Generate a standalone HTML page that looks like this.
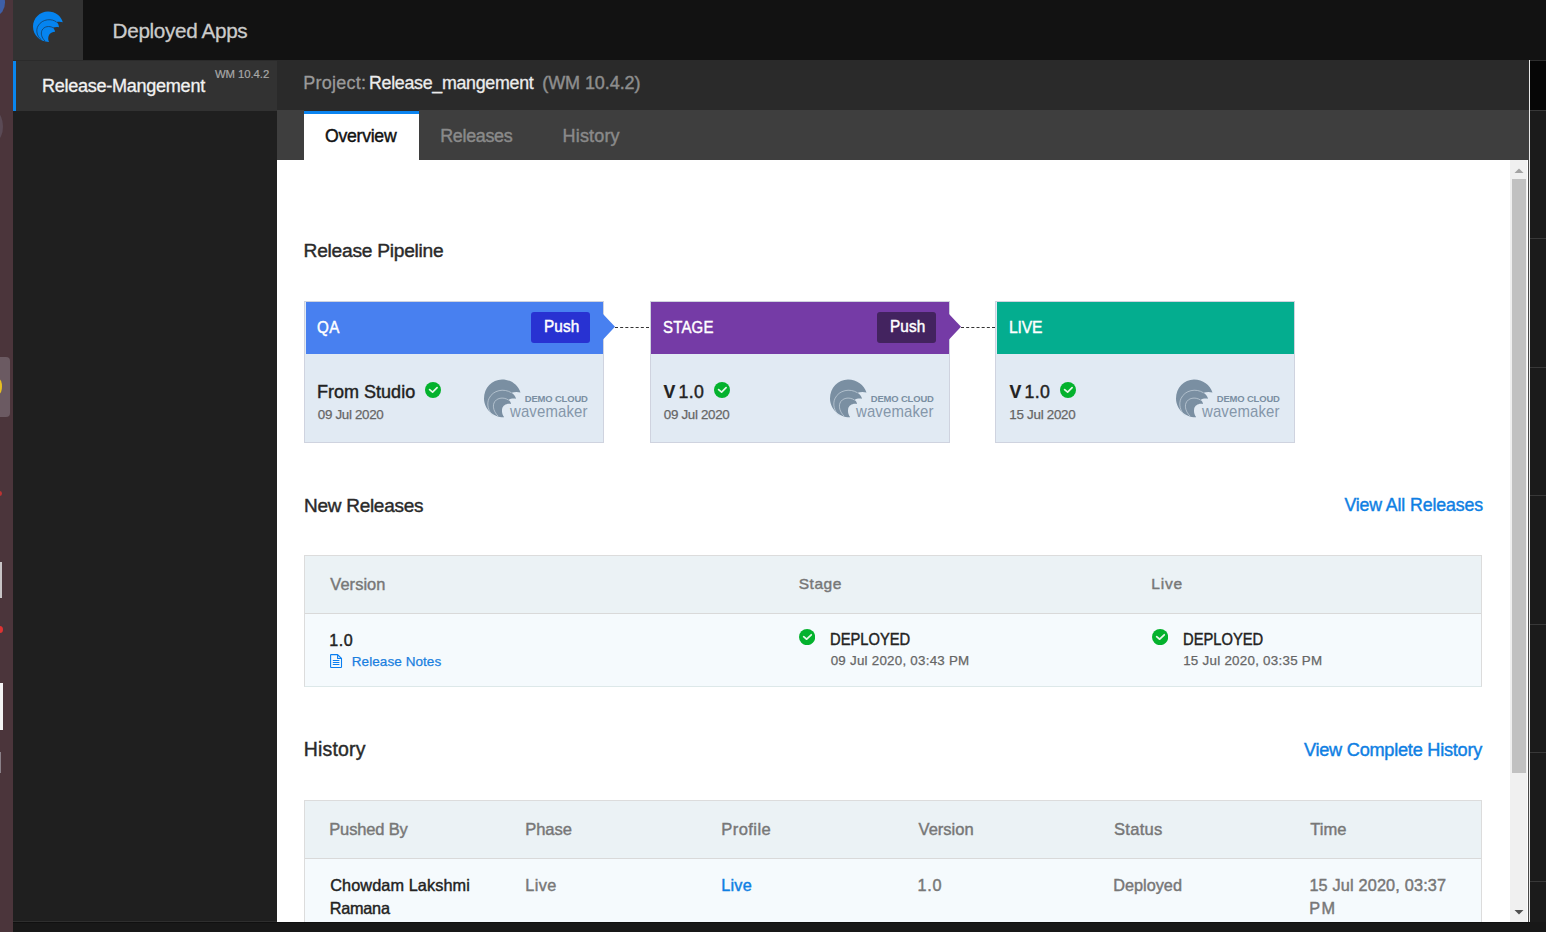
<!DOCTYPE html>
<html><head><meta charset="utf-8"><style>
html,body{margin:0;padding:0;}
body{width:1546px;height:932px;overflow:hidden;position:relative;background:#1b1b1b;font-family:"Liberation Sans",sans-serif;}
.a{position:absolute;}
.t{position:absolute;white-space:nowrap;}
</style></head><body>
<div class="a" style="left:0;top:0;width:13px;height:932px;background:#4b353b"></div>
<div class="a" style="left:-12px;top:-10px;width:17px;height:25px;border-radius:50%;background:#3e5fa8"></div>
<div class="a" style="left:-10px;top:113px;width:13px;height:27px;border-radius:50%;background:#5a4a55"></div>
<div class="a" style="left:-6px;top:357px;width:16px;height:60px;border-radius:4px;background:#6b5a62"></div>
<div class="a" style="left:-4px;top:379px;width:6px;height:15px;border-radius:50%;background:#e8c020"></div>
<div class="a" style="left:0;top:562px;width:2px;height:36px;background:#c8c4c6"></div>
<div class="a" style="left:-3px;top:626px;width:6px;height:7px;border-radius:50%;background:#d33"></div>
<div class="a" style="left:-3px;top:491px;width:5px;height:5px;border-radius:50%;background:#b33"></div>
<div class="a" style="left:0;top:683px;width:3px;height:47px;background:#f4f4f4"></div>
<div class="a" style="left:0;top:752px;width:1px;height:21px;background:#8a8088"></div>
<div class="a" style="left:13px;top:0;width:1533px;height:60px;background:#121212"></div>
<div class="a" style="left:13px;top:0;width:70px;height:60px;background:#323232"></div>
<svg class="a" style="left:32px;top:11px" width="32" height="32" viewBox="0 0 32 32">
<path d="M16 0.5 C23.2 0.5 29.2 5 30.8 11.3 C28.8 10.6 26.5 10.6 24.6 11.1 C26 12.5 26.9 14.3 27 16.2 C25 15.8 22.8 16 20.9 16.6 C22 17.7 22.8 19.2 23.1 20.7 C21 20.6 18.9 21.6 17.5 23.3 C16 25.3 15.8 28.5 17 30.9 C8.5 31 1 24.5 1 15.5 C1 7.2 7.8 0.5 16 0.5 Z" fill="#0584f0"/>
<path d="M24.6 11.1 C20.5 7.6 10.5 7.2 6 15 C3.8 19 4.5 25 9.5 29" fill="none" stroke="#17385a" stroke-width="0.75"/>
<path d="M20.9 16.6 C17.5 14.8 12 15 9.9 19.5 C8.6 22.5 9.5 26.5 13 30" fill="none" stroke="#17385a" stroke-width="0.75"/>
</svg>
<div class="t" style="left:112.61px;top:21.03px;font-size:20.69px;line-height:20.69px;color:#cbcbcb;font-weight:normal;letter-spacing:-0.339px;-webkit-text-stroke:0.3px #cbcbcb;">Deployed Apps</div>
<div class="a" style="left:13px;top:60px;width:264px;height:862px;background:#1f1f1f"></div>
<div class="a" style="left:13px;top:60px;width:264px;height:1px;background:#2b2b2b"></div>
<div class="a" style="left:13px;top:61px;width:264px;height:50px;background:#323232"></div>
<div class="a" style="left:13px;top:61px;width:3px;height:50px;background:#0a86ee"></div>
<div class="t" style="left:41.96px;top:76.52px;font-size:18.08px;line-height:18.08px;color:#f2f2f2;font-weight:normal;letter-spacing:-0.287px;-webkit-text-stroke:0.3px #f2f2f2;">Release-Mangement</div>
<div class="t" style="left:215.00px;top:69.38px;font-size:11.34px;line-height:11.34px;color:#a8a8a8;font-weight:normal;letter-spacing:-0.072px;-webkit-text-stroke:0.2px #a8a8a8;">WM 10.4.2</div>
<div class="a" style="left:1529px;top:60px;width:1px;height:862px;background:#e8e8e8"></div>
<div class="a" style="left:1530px;top:60px;width:16px;height:50px;background:#060606"></div>
<div class="a" style="left:1530px;top:60px;width:16px;height:1px;background:#2e2e2e"></div>
<div class="a" style="left:1530px;top:110px;width:16px;height:812px;background:#1b1b1b"></div>
<div class="a" style="left:1530px;top:110px;width:16px;height:1px;background:#383838"></div>
<div class="a" style="left:1530px;top:238px;width:16px;height:1px;background:#383838"></div>
<div class="a" style="left:1530px;top:367px;width:16px;height:1px;background:#383838"></div>
<div class="a" style="left:1530px;top:495px;width:16px;height:1px;background:#383838"></div>
<div class="a" style="left:1530px;top:624px;width:16px;height:1px;background:#383838"></div>
<div class="a" style="left:1530px;top:752px;width:16px;height:1px;background:#383838"></div>
<div class="a" style="left:1530px;top:881px;width:16px;height:1px;background:#383838"></div>
<div class="a" style="left:277px;top:60px;width:1252px;height:50px;background:#2a2a2a"></div>
<div class="t" style="left:303.14px;top:73.57px;font-size:18.02px;line-height:18.02px;color:#9a9a9a;font-weight:normal;letter-spacing:0.272px;-webkit-text-stroke:0.3px #9a9a9a;">Project:</div>
<div class="t" style="left:368.96px;top:74.54px;font-size:17.81px;line-height:17.81px;color:#ececec;font-weight:normal;letter-spacing:-0.277px;-webkit-text-stroke:0.3px #ececec;">Release_mangement</div>
<div class="t" style="left:542.24px;top:73.57px;font-size:18.02px;line-height:18.02px;color:#8e8e8e;font-weight:normal;letter-spacing:-0.081px;-webkit-text-stroke:0.42px #8e8e8e;">(WM 10.4.2)</div>
<div class="a" style="left:277px;top:110px;width:1252px;height:50px;background:#3e3e3e"></div>
<div class="a" style="left:304px;top:110px;width:115px;height:50px;background:#fff"></div>
<div class="a" style="left:304px;top:110px;width:115px;height:1px;background:#2a2a2a"></div>
<div class="a" style="left:304px;top:111px;width:115px;height:3px;background:#0a84f0"></div>
<div class="t" style="left:325.12px;top:127.84px;font-size:17.67px;line-height:17.67px;color:#111;font-weight:normal;letter-spacing:-0.292px;-webkit-text-stroke:0.42px #111;">Overview</div>
<div class="t" style="left:440.22px;top:127.63px;font-size:17.92px;line-height:17.92px;color:#8a8a8a;font-weight:normal;letter-spacing:-0.308px;-webkit-text-stroke:0.42px #8a8a8a;">Releases</div>
<div class="t" style="left:562.58px;top:126.75px;font-size:18.02px;line-height:18.02px;color:#8a8a8a;font-weight:normal;letter-spacing:0.167px;-webkit-text-stroke:0.42px #8a8a8a;">History</div>
<div class="a" style="left:277px;top:160px;width:1252px;height:762px;background:#fff"></div>
<div class="a" style="left:1510px;top:160px;width:17px;height:762px;background:#f0f0f0"></div>
<div class="a" style="left:1528px;top:160px;width:1px;height:762px;background:#474747"></div>
<div class="a" style="left:1512px;top:179px;width:14px;height:594px;background:#c1c1c1"></div>
<svg class="a" style="left:1513px;top:167px" width="12" height="7" viewBox="0 0 12 7"><path d="M1.5 6 L6 1.5 L10.5 6 Z" fill="#a3a3a3"/></svg>
<div class="t" style="left:303.56px;top:240.58px;font-size:19.19px;line-height:19.19px;color:#2a2a2a;font-weight:normal;letter-spacing:-0.259px;-webkit-text-stroke:0.42px #2a2a2a;">Release Pipeline</div>
<div class="a" style="left:304px;top:301px;width:298px;height:140px;border:1px solid #cfd3df;background:#e1eaf3"></div>
<div class="a" style="left:306px;top:302px;width:297px;height:52px;background:#4880f0"></div>
<svg class="a" style="left:603px;top:314px" width="13" height="26" viewBox="0 0 13 26"><path d="M0 0 L12 12.7 L0 25.4 Z" fill="#4880f0"/></svg>
<div class="a" style="left:615px;top:327px;width:34px;height:0;border-top:1px dashed #333"></div>
<div class="t" style="left:316.88px;top:319.65px;font-size:16.72px;line-height:16.72px;color:#fff;font-weight:normal;letter-spacing:0.605px;-webkit-text-stroke:0.45px #fff;transform:scaleX(0.9090909090909086);transform-origin:0 0;">QA</div>
<div class="a" style="left:531px;top:312px;width:59px;height:31px;border-radius:3px;background:#2832d2"></div>
<div class="t" style="left:543.51px;top:318.59px;font-size:15.84px;line-height:15.84px;color:#fff;font-weight:normal;letter-spacing:0.085px;-webkit-text-stroke:0.45px #fff;transform:scaleX(0.9697416974169761);transform-origin:0 0;">Push</div>
<div class="t" style="left:316.96px;top:382.57px;font-size:18.02px;line-height:18.02px;color:#222;font-weight:normal;letter-spacing:0.009px;-webkit-text-stroke:0.42px #222;">From Studio</div>
<svg class="a" style="left:425.20px;top:382.00px" width="16" height="16" viewBox="0 0 16 16"><circle cx="8" cy="8" r="8" fill="#04b22d"/><path d="M4.6 7.6 L7.6 10.1 L12.1 5.7" fill="none" stroke="#e6f7e8" stroke-width="1.7" stroke-linecap="round" stroke-linejoin="round"/></svg>
<div class="t" style="left:317.86px;top:407.68px;font-size:13.37px;line-height:13.37px;color:#666;font-weight:normal;letter-spacing:-0.328px;-webkit-text-stroke:0.25px #666;">09 Jul 2020</div>
<svg class="a" style="left:484px;top:379px" width="38" height="39" viewBox="0 0 38 39"><path d="M18 0.5 C27 0.5 34 6 36.5 13.5 C33 12.5 30 13 27.5 13.8 C30 15.5 31.5 17.5 32 19.8 C29 19.3 26.5 19.8 24.5 21 C26 22 27 23.5 27 25 C22.5 24 19 26.5 18.2 29.5 C17.6 32.5 18.2 35.8 20.2 38.3 C9 38.5 0 30 0 19.5 C0 9 8 0.5 18 0.5 Z" fill="#7a8fa2"/><path d="M27.5 13.8 C20 9 9 11 5 19.5 C2.5 25 4 32 9 36.5" fill="none" stroke="#c9d4de" stroke-width="0.7"/><path d="M24.5 21 C19 17.5 12 19 10 24 C8.5 28 10 33 14 37" fill="none" stroke="#c9d4de" stroke-width="0.7"/></svg>
<div class="t" style="left:524.84px;top:393.82px;font-size:9.45px;line-height:9.45px;color:#7a8fa2;font-weight:bold;letter-spacing:-0.159px;">DEMO CLOUD</div>
<div class="t" style="left:510.36px;top:403.57px;font-size:16.6px;line-height:16.6px;color:#8597aa;font-weight:normal;letter-spacing:0.144px;transform:scaleX(0.9);transform-origin:0 0;">wavemaker</div>
<div class="a" style="left:650px;top:301px;width:298px;height:140px;border:1px solid #cfd3df;background:#e1eaf3"></div>
<div class="a" style="left:651px;top:302px;width:298px;height:52px;background:#753ba6"></div>
<svg class="a" style="left:949px;top:314px" width="13" height="26" viewBox="0 0 13 26"><path d="M0 0 L12 12.7 L0 25.4 Z" fill="#753ba6"/></svg>
<div class="a" style="left:961px;top:327px;width:34px;height:0;border-top:1px dashed #333"></div>
<div class="t" style="left:662.89px;top:319.65px;font-size:16.72px;line-height:16.72px;color:#fff;font-weight:normal;letter-spacing:0.213px;-webkit-text-stroke:0.45px #fff;transform:scaleX(0.8969976905311777);transform-origin:0 0;">STAGE</div>
<div class="a" style="left:877px;top:312px;width:59px;height:31px;border-radius:3px;background:#43235f"></div>
<div class="t" style="left:889.51px;top:318.59px;font-size:15.84px;line-height:15.84px;color:#fff;font-weight:normal;letter-spacing:0.085px;-webkit-text-stroke:0.45px #fff;transform:scaleX(0.9697416974169761);transform-origin:0 0;">Push</div>
<div class="t" style="left:663.59px;top:383.79px;font-size:17.73px;line-height:17.73px;color:#222;font-weight:bold;letter-spacing:0.000px;-webkit-text-stroke:0.2px #222;">V</div>
<div class="t" style="left:678.62px;top:383.79px;font-size:17.73px;line-height:17.73px;color:#222;font-weight:normal;letter-spacing:0.247px;-webkit-text-stroke:0.42px #222;">1.0</div>
<svg class="a" style="left:714.10px;top:382.00px" width="16" height="16" viewBox="0 0 16 16"><circle cx="8" cy="8" r="8" fill="#04b22d"/><path d="M4.6 7.6 L7.6 10.1 L12.1 5.7" fill="none" stroke="#e6f7e8" stroke-width="1.7" stroke-linecap="round" stroke-linejoin="round"/></svg>
<div class="t" style="left:663.86px;top:407.68px;font-size:13.37px;line-height:13.37px;color:#666;font-weight:normal;letter-spacing:-0.328px;-webkit-text-stroke:0.25px #666;">09 Jul 2020</div>
<svg class="a" style="left:830px;top:379px" width="38" height="39" viewBox="0 0 38 39"><path d="M18 0.5 C27 0.5 34 6 36.5 13.5 C33 12.5 30 13 27.5 13.8 C30 15.5 31.5 17.5 32 19.8 C29 19.3 26.5 19.8 24.5 21 C26 22 27 23.5 27 25 C22.5 24 19 26.5 18.2 29.5 C17.6 32.5 18.2 35.8 20.2 38.3 C9 38.5 0 30 0 19.5 C0 9 8 0.5 18 0.5 Z" fill="#7a8fa2"/><path d="M27.5 13.8 C20 9 9 11 5 19.5 C2.5 25 4 32 9 36.5" fill="none" stroke="#c9d4de" stroke-width="0.7"/><path d="M24.5 21 C19 17.5 12 19 10 24 C8.5 28 10 33 14 37" fill="none" stroke="#c9d4de" stroke-width="0.7"/></svg>
<div class="t" style="left:870.84px;top:393.82px;font-size:9.45px;line-height:9.45px;color:#7a8fa2;font-weight:bold;letter-spacing:-0.159px;">DEMO CLOUD</div>
<div class="t" style="left:856.36px;top:403.57px;font-size:16.6px;line-height:16.6px;color:#8597aa;font-weight:normal;letter-spacing:0.144px;transform:scaleX(0.9);transform-origin:0 0;">wavemaker</div>
<div class="a" style="left:995px;top:301px;width:298px;height:140px;border:1px solid #cfd3df;background:#e1eaf3"></div>
<div class="a" style="left:997px;top:302px;width:297px;height:52px;background:#04ad8f"></div>
<div class="t" style="left:1009.07px;top:319.65px;font-size:16.72px;line-height:16.72px;color:#fff;font-weight:normal;letter-spacing:-0.123px;-webkit-text-stroke:0.45px #fff;transform:scaleX(0.9357664233576641);transform-origin:0 0;">LIVE</div>
<div class="t" style="left:1009.59px;top:383.79px;font-size:17.73px;line-height:17.73px;color:#222;font-weight:bold;letter-spacing:0.000px;-webkit-text-stroke:0.2px #222;">V</div>
<div class="t" style="left:1024.62px;top:383.79px;font-size:17.73px;line-height:17.73px;color:#222;font-weight:normal;letter-spacing:0.247px;-webkit-text-stroke:0.42px #222;">1.0</div>
<svg class="a" style="left:1059.60px;top:382.00px" width="16" height="16" viewBox="0 0 16 16"><circle cx="8" cy="8" r="8" fill="#04b22d"/><path d="M4.6 7.6 L7.6 10.1 L12.1 5.7" fill="none" stroke="#e6f7e8" stroke-width="1.7" stroke-linecap="round" stroke-linejoin="round"/></svg>
<div class="t" style="left:1009.36px;top:407.68px;font-size:13.37px;line-height:13.37px;color:#666;font-weight:normal;letter-spacing:-0.278px;-webkit-text-stroke:0.25px #666;">15 Jul 2020</div>
<svg class="a" style="left:1176px;top:379px" width="38" height="39" viewBox="0 0 38 39"><path d="M18 0.5 C27 0.5 34 6 36.5 13.5 C33 12.5 30 13 27.5 13.8 C30 15.5 31.5 17.5 32 19.8 C29 19.3 26.5 19.8 24.5 21 C26 22 27 23.5 27 25 C22.5 24 19 26.5 18.2 29.5 C17.6 32.5 18.2 35.8 20.2 38.3 C9 38.5 0 30 0 19.5 C0 9 8 0.5 18 0.5 Z" fill="#7a8fa2"/><path d="M27.5 13.8 C20 9 9 11 5 19.5 C2.5 25 4 32 9 36.5" fill="none" stroke="#c9d4de" stroke-width="0.7"/><path d="M24.5 21 C19 17.5 12 19 10 24 C8.5 28 10 33 14 37" fill="none" stroke="#c9d4de" stroke-width="0.7"/></svg>
<div class="t" style="left:1216.84px;top:393.82px;font-size:9.45px;line-height:9.45px;color:#7a8fa2;font-weight:bold;letter-spacing:-0.159px;">DEMO CLOUD</div>
<div class="t" style="left:1202.36px;top:403.57px;font-size:16.6px;line-height:16.6px;color:#8597aa;font-weight:normal;letter-spacing:0.144px;transform:scaleX(0.9);transform-origin:0 0;">wavemaker</div>
<div class="t" style="left:304.04px;top:496.11px;font-size:18.98px;line-height:18.98px;color:#2a2a2a;font-weight:normal;letter-spacing:-0.263px;-webkit-text-stroke:0.42px #2a2a2a;">New Releases</div>
<div class="t" style="left:1344.41px;top:497.43px;font-size:17.73px;line-height:17.73px;color:#0f7fe3;font-weight:normal;letter-spacing:-0.118px;-webkit-text-stroke:0.42px #0f7fe3;">View All Releases</div>
<div class="a" style="left:304px;top:555px;width:1176px;height:130px;border:1px solid #dcdcdc;border-bottom-color:#dde8e9;background:#f5fafd"></div>
<div class="a" style="left:305px;top:556px;width:1176px;height:57px;background:#ebf2f5;border-bottom:1px solid #d9d9d9"></div>
<div class="t" style="left:330.33px;top:576.28px;font-size:16.42px;line-height:16.42px;color:#777;font-weight:normal;letter-spacing:0.064px;-webkit-text-stroke:0.42px #777;">Version</div>
<div class="t" style="left:798.71px;top:576.48px;font-size:15.55px;line-height:15.55px;color:#777;font-weight:normal;letter-spacing:0.524px;-webkit-text-stroke:0.42px #777;">Stage</div>
<div class="t" style="left:1151.21px;top:576.48px;font-size:15.55px;line-height:15.55px;color:#777;font-weight:normal;letter-spacing:0.798px;-webkit-text-stroke:0.42px #777;">Live</div>
<div class="t" style="left:329.21px;top:631.81px;font-size:16.13px;line-height:16.13px;color:#222;font-weight:normal;letter-spacing:0.618px;-webkit-text-stroke:0.42px #222;">1.0</div>
<svg class="a" style="left:330px;top:654px" width="13" height="15" viewBox="0 0 13 15"><path d="M1.5 0.6 H7.6 L11.5 4.5 V12.9 Q11.5 13.5 10.9 13.5 H1.1 Q0.6 13.5 0.6 12.9 V1.1 Q0.6 0.6 1.1 0.6 Z M7.6 0.6 V4.5 H11.5" fill="none" stroke="#0a7ef0" stroke-width="1.1" stroke-linejoin="round"/><path d="M3.2 6.5 H9 M3.2 8.5 H9 M3.2 10.5 H9" stroke="#0a7ef0" stroke-width="1" stroke-linecap="round"/></svg>
<div class="t" style="left:351.77px;top:655.18px;font-size:13.52px;line-height:13.52px;color:#1a7fdf;font-weight:normal;letter-spacing:0.066px;-webkit-text-stroke:0.25px #1a7fdf;">Release Notes</div>
<svg class="a" style="left:799.30px;top:628.80px" width="16.2" height="16.2" viewBox="0 0 16 16"><circle cx="8" cy="8" r="8" fill="#04b22d"/><path d="M4.6 7.6 L7.6 10.1 L12.1 5.7" fill="none" stroke="#e6f7e8" stroke-width="1.7" stroke-linecap="round" stroke-linejoin="round"/></svg>
<svg class="a" style="left:1152.30px;top:628.80px" width="16.2" height="16.2" viewBox="0 0 16 16"><circle cx="8" cy="8" r="8" fill="#04b22d"/><path d="M4.6 7.6 L7.6 10.1 L12.1 5.7" fill="none" stroke="#e6f7e8" stroke-width="1.7" stroke-linecap="round" stroke-linejoin="round"/></svg>
<div class="t" style="left:830.03px;top:632.26px;font-size:15.99px;line-height:15.99px;color:#222;font-weight:normal;letter-spacing:-0.006px;-webkit-text-stroke:0.42px #222;transform:scaleX(0.9219383259911892);transform-origin:0 0;">DEPLOYED</div>
<div class="t" style="left:830.68px;top:654.12px;font-size:13.37px;line-height:13.37px;color:#666;font-weight:normal;letter-spacing:0.243px;-webkit-text-stroke:0.25px #666;">09 Jul 2020, 03:43 PM</div>
<div class="t" style="left:1183.03px;top:632.26px;font-size:15.99px;line-height:15.99px;color:#222;font-weight:normal;letter-spacing:-0.006px;-webkit-text-stroke:0.42px #222;transform:scaleX(0.9219383259911905);transform-origin:0 0;">DEPLOYED</div>
<div class="t" style="left:1183.18px;top:654.12px;font-size:13.37px;line-height:13.37px;color:#666;font-weight:normal;letter-spacing:0.264px;-webkit-text-stroke:0.25px #666;">15 Jul 2020, 03:35 PM</div>
<div class="t" style="left:303.73px;top:739.51px;font-size:19.48px;line-height:19.48px;color:#2a2a2a;font-weight:normal;letter-spacing:0.187px;-webkit-text-stroke:0.42px #2a2a2a;">History</div>
<div class="t" style="left:1303.96px;top:740.56px;font-size:18.15px;line-height:18.15px;color:#0f7fe3;font-weight:normal;letter-spacing:-0.240px;-webkit-text-stroke:0.42px #0f7fe3;">View Complete History</div>
<div class="a" style="left:304px;top:800px;width:1176px;height:200px;border:1px solid #dcdcdc;border-bottom-color:#dde8e9;background:#f5fafd"></div>
<div class="a" style="left:305px;top:801px;width:1176px;height:57px;background:#ebf2f5;border-bottom:1px solid #d9d9d9"></div>
<div class="t" style="left:329.27px;top:821.82px;font-size:16.52px;line-height:16.52px;color:#777;font-weight:normal;letter-spacing:-0.169px;-webkit-text-stroke:0.42px #777;">Pushed By</div>
<div class="t" style="left:525.27px;top:821.77px;font-size:16.57px;line-height:16.57px;color:#777;font-weight:normal;letter-spacing:-0.085px;-webkit-text-stroke:0.42px #777;">Phase</div>
<div class="t" style="left:721.27px;top:821.77px;font-size:16.57px;line-height:16.57px;color:#777;font-weight:normal;letter-spacing:0.413px;-webkit-text-stroke:0.42px #777;">Profile</div>
<div class="t" style="left:918.52px;top:821.77px;font-size:16.57px;line-height:16.57px;color:#777;font-weight:normal;letter-spacing:-0.022px;-webkit-text-stroke:0.42px #777;">Version</div>
<div class="t" style="left:1113.89px;top:821.77px;font-size:16.57px;line-height:16.57px;color:#777;font-weight:normal;letter-spacing:0.301px;-webkit-text-stroke:0.42px #777;">Status</div>
<div class="t" style="left:1310.26px;top:821.77px;font-size:16.57px;line-height:16.57px;color:#777;font-weight:normal;letter-spacing:0.017px;-webkit-text-stroke:0.42px #777;">Time</div>
<div class="t" style="left:330.21px;top:876.68px;font-size:16.28px;line-height:16.28px;color:#222;font-weight:normal;letter-spacing:0.089px;-webkit-text-stroke:0.42px #222;">Chowdam Lakshmi</div>
<div class="t" style="left:329.71px;top:900.22px;font-size:16.28px;line-height:16.28px;color:#222;font-weight:normal;letter-spacing:-0.244px;-webkit-text-stroke:0.42px #222;">Ramana</div>
<div class="t" style="left:525.27px;top:876.68px;font-size:16.28px;line-height:16.28px;color:#777;font-weight:normal;letter-spacing:0.423px;-webkit-text-stroke:0.42px #777;">Live</div>
<div class="t" style="left:721.27px;top:876.68px;font-size:16.28px;line-height:16.28px;color:#0f7fe3;font-weight:normal;letter-spacing:0.217px;-webkit-text-stroke:0.42px #0f7fe3;">Live</div>
<div class="t" style="left:917.39px;top:876.68px;font-size:16.28px;line-height:16.28px;color:#777;font-weight:normal;letter-spacing:0.837px;-webkit-text-stroke:0.42px #777;">1.0</div>
<div class="t" style="left:1113.26px;top:876.68px;font-size:16.28px;line-height:16.28px;color:#777;font-weight:normal;letter-spacing:-0.004px;-webkit-text-stroke:0.42px #777;">Deployed</div>
<div class="t" style="left:1309.39px;top:876.68px;font-size:16.28px;line-height:16.28px;color:#777;font-weight:normal;letter-spacing:0.168px;-webkit-text-stroke:0.42px #777;">15 Jul 2020, 03:37</div>
<div class="t" style="left:1309.26px;top:900.22px;font-size:16.28px;line-height:16.28px;color:#777;font-weight:normal;letter-spacing:1.470px;-webkit-text-stroke:0.42px #777;">PM</div>
<div class="a" style="left:13px;top:922px;width:1533px;height:10px;background:#181818"></div>
<div class="a" style="left:13px;top:922px;width:1517px;height:1px;background:#101010"></div>
<div class="a" style="left:13px;top:921px;width:264px;height:1px;background:#2e2e2e"></div>
<svg class="a" style="left:1513px;top:909px" width="12" height="7" viewBox="0 0 12 7"><path d="M1.5 1 L6 5.5 L10.5 1 Z" fill="#505050"/></svg>
</body></html>
